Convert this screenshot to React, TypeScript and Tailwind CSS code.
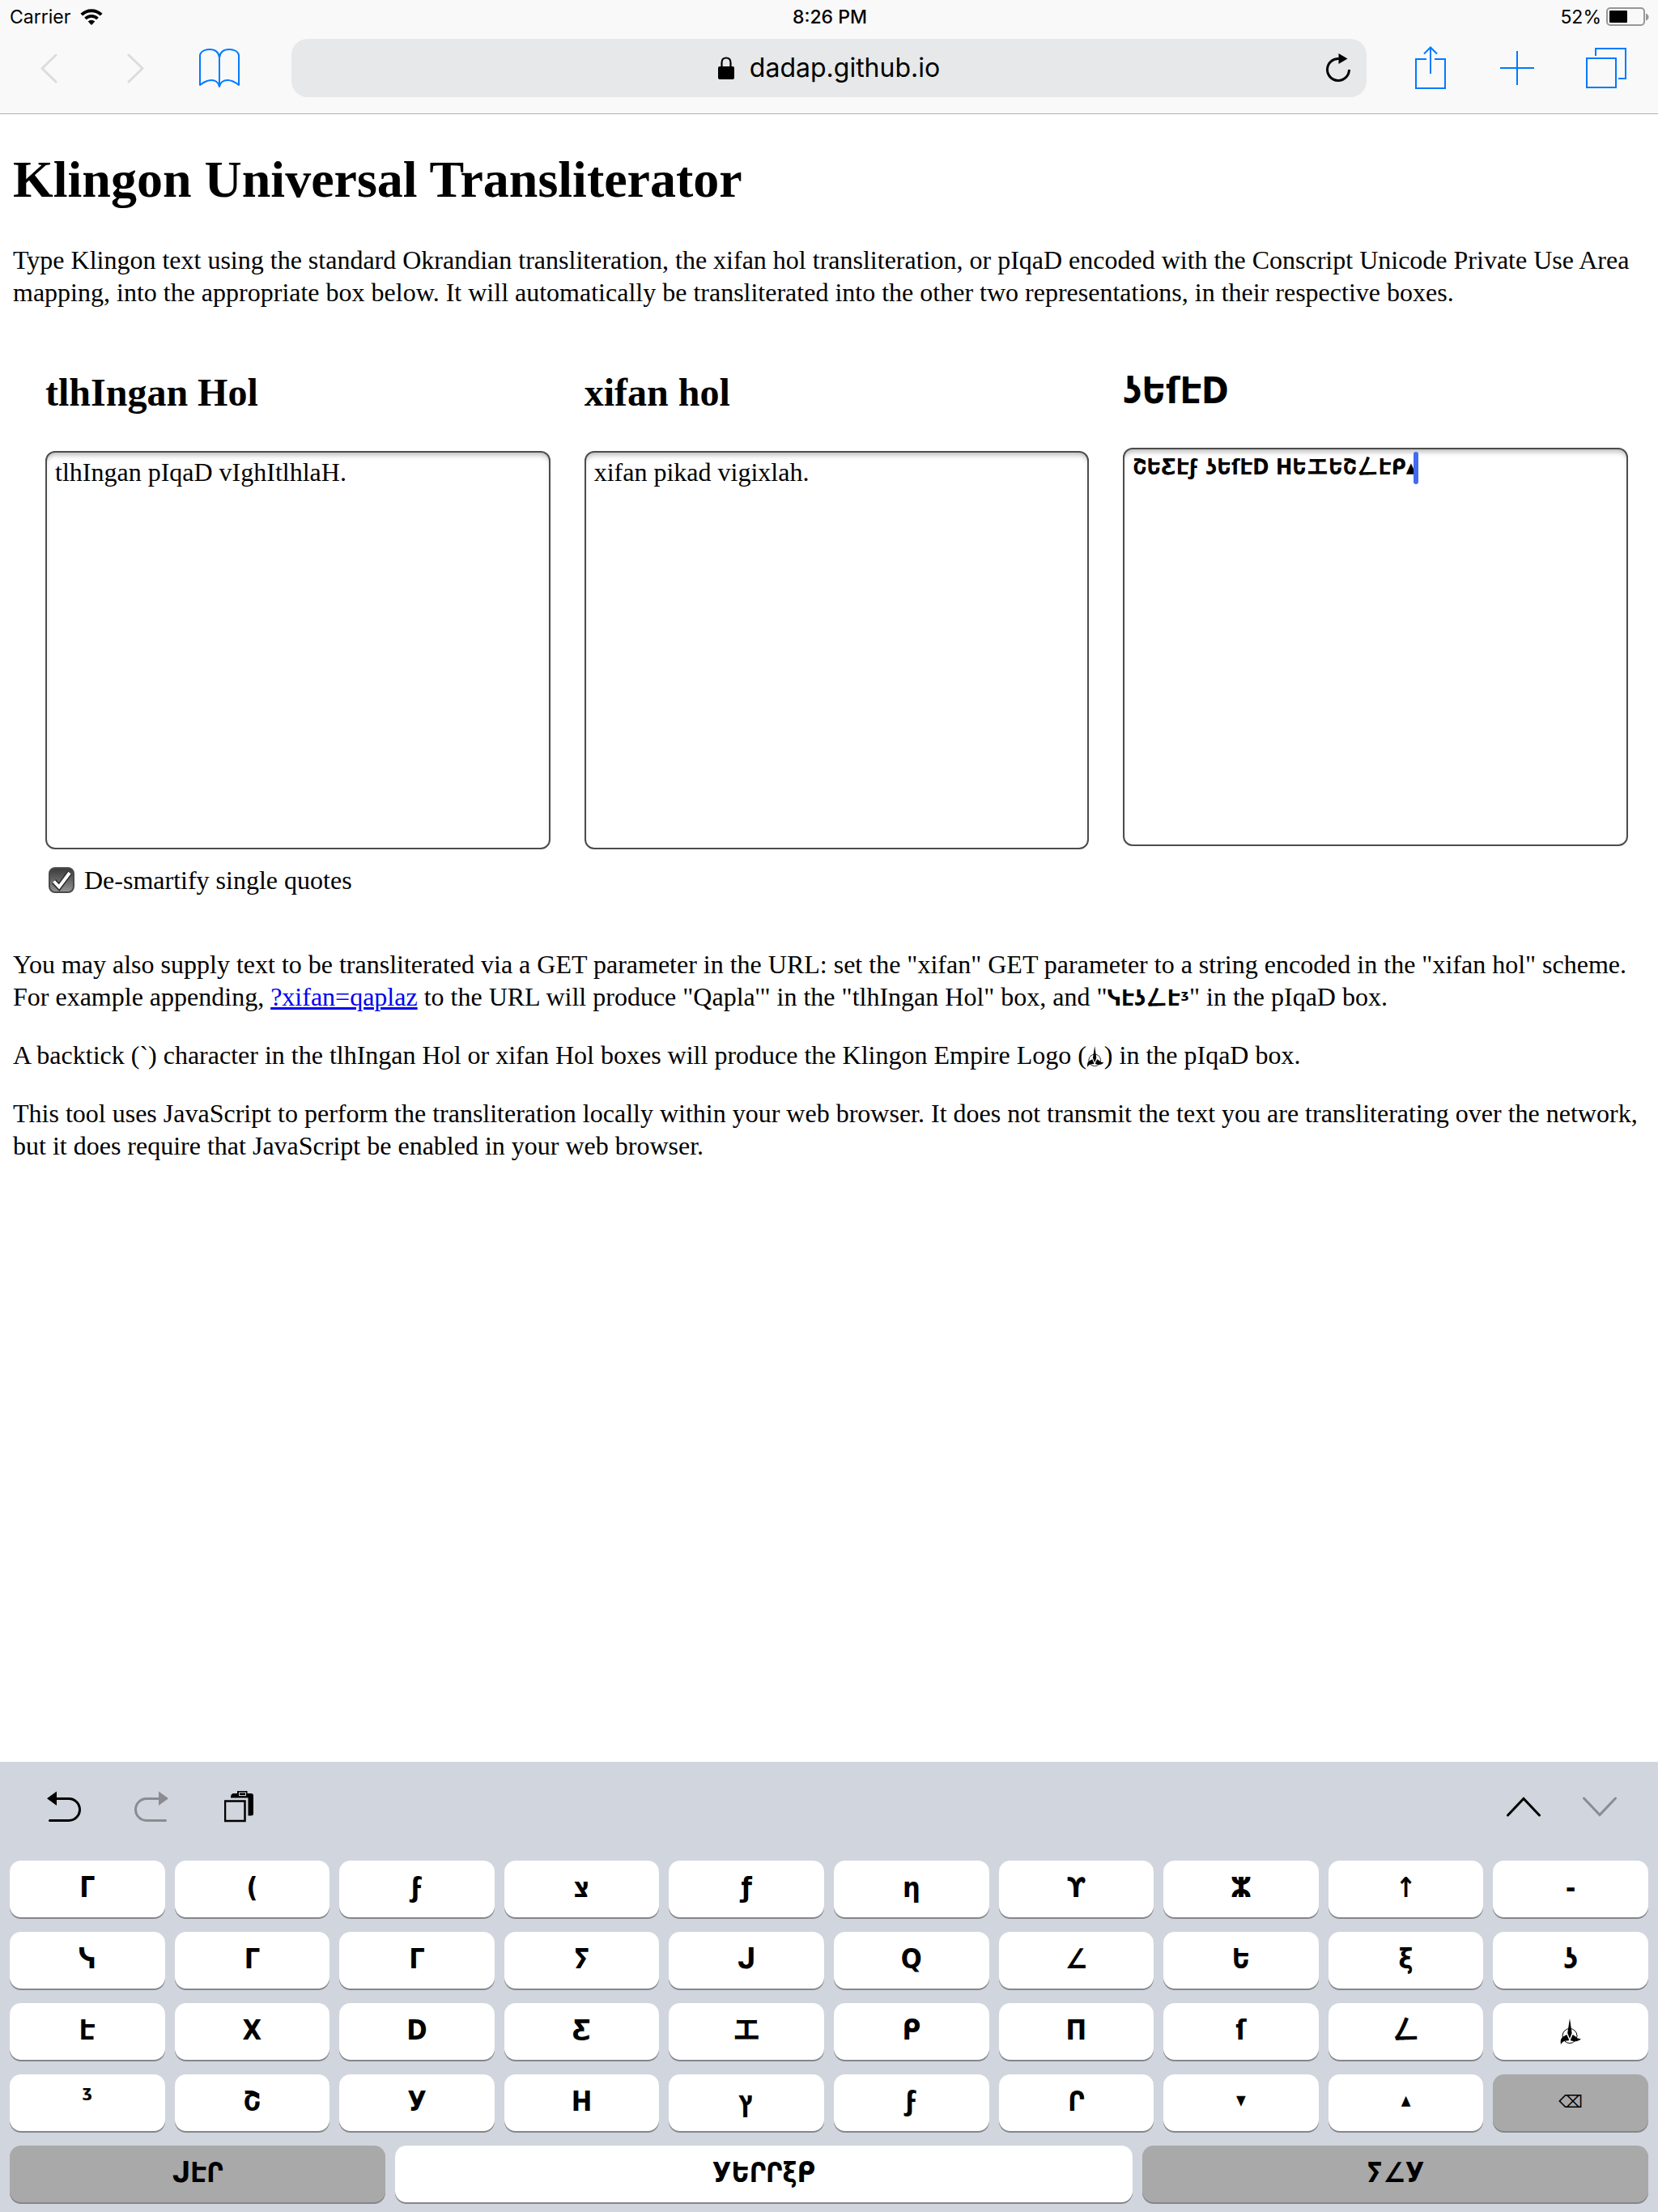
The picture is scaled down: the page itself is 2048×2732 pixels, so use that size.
import React from "react";

const PIQAD = "font-['DejaVu_Sans_Condensed','DejaVu_Sans','Noto_Sans_CJK_TC','Noto_Sans_CJK_JP',sans-serif] font-bold";

function Emblem({ className }: { className: string }) {
  return (
    <svg viewBox="0 0 26 32" className={className} aria-label="Klingon Empire logo" role="img">
      <circle cx="12" cy="21.5" r="9" fill="none" stroke="#000" strokeWidth="1" />
      <path d="M12 0 L14.6 18 L12 25 L9.2 18 Z" fill="#000" />
      <path d="M8.4 20 L11.3 27 L8.5 27.5 Q3.5 27 1 32 Q-.5 24.500 4.500 22 Z" fill="#000" />
      <path d="M15.6 20 L12.700 27 Q17 28.500 20 28.200 Q24 27.500 26 25 Q21 25.500 19 22 Z" fill="#000" />
    </svg>
  );
}

function WifiIcon() {
  return (
    <svg viewBox="0 0 28 20" className="h-5 w-7" aria-hidden="true">
      <path d="M1.800 7.200 A17.300 17.300 0 0 1 26.200 7.200" fill="none" stroke="#000" strokeWidth="4" />
      <path d="M6.500 12 A10.600 10.600 0 0 1 21.500 12" fill="none" stroke="#000" strokeWidth="3.600" />
      <path d="M14 20 L9.700 15.600 A6 6 0 0 1 18.300 15.600 Z" fill="#000" />
    </svg>
  );
}

function StatusBar() {
  return (
    <div className="grid h-10 grid-cols-3 items-center pl-3 pr-2.5 pt-px font-[Inter,sans-serif] text-[23px] leading-10 text-black">
      <div className="flex items-center gap-3">
        <span>Carrier</span>
        <WifiIcon />
      </div>
      <div className="text-center font-medium">8:26 PM</div>
      <div className="flex items-center justify-end gap-1.5">
        <span>52%</span>
        <svg viewBox="0 0 54 24" className="h-6 w-[54px]" aria-hidden="true">
          <rect x="1" y="1" width="46" height="21" rx="4" fill="none" stroke="#979797" strokeWidth="2" />
          <rect x="4" y="4" width="22" height="15" rx="1" fill="#000" />
          <path d="M49 7.500 Q52.500 9 52.500 12 Q52.500 15 49 16.500 Z" fill="#979797" />
        </svg>
      </div>
    </div>
  );
}

function BrowserBar() {
  const stroke = { fill: "none", stroke: "#007aff", strokeWidth: 2 };
  return (
    <div className="flex h-[100px] items-start pt-2">
      <div className="flex h-[72px] w-[360px] shrink-0 items-center">
        <button aria-label="Back" disabled className="ml-12">
          <svg viewBox="0 0 24 38" className="h-[38px] w-6"><path d="M21 3 L4 19.500 L21 36" fill="none" stroke="#dcdcdd" strokeWidth="3" strokeLinecap="round" strokeLinejoin="round" /></svg>
        </button>
        <button aria-label="Forward" disabled className="ml-[82px]">
          <svg viewBox="0 0 24 38" className="h-[38px] w-6"><path d="M5 3 L22 19.500 L5 36" fill="none" stroke="#dcdcdd" strokeWidth="3" strokeLinecap="round" strokeLinejoin="round" /></svg>
        </button>
        <button aria-label="Bookmarks" className="ml-[67px]">
          <svg viewBox="0 0 52 50" className="h-[50px] w-[52px]">
            <path d="M26 48 V12 C25 5 20 2 14 2 C8 2 3 4.500 2 9 V46 C7 42 12 40 16 40 C21 40 25 43 26 48 C27 43 31 40 36 40 C40 40 45 42 50 46 V9 C49 4.500 44 2 38 2 C32 2 27 5 26 12" {...stroke} strokeLinejoin="round" />
          </svg>
        </button>
      </div>
      <div className="relative flex h-[72px] grow items-center justify-center rounded-[20px] bg-[#e6e8e9]">
        <div className="flex items-center gap-[19px]">
          <svg viewBox="0 0 20 28" className="h-7 w-5" aria-hidden="true">
            <path d="M4.500 13 V7.500 Q4.500 1.500 10 1.500 Q15.500 1.500 15.500 7.500 V13" fill="none" stroke="#000" strokeWidth="2.200" />
            <rect x="0" y="12" width="20" height="16" rx="2" fill="#000" />
          </svg>
          <span className="font-[Inter,sans-serif] text-[32px] leading-[72px]">dadap.github.io</span>
        </div>
        <button aria-label="Reload" className="absolute right-[18px] top-[17px]">
          <svg viewBox="0 0 34 38" className="h-[38px] w-[34px]">
            <path d="M18 7.500 A13.500 13.500 0 1 0 30.500 21" fill="none" stroke="#000" strokeWidth="3" />
            <path d="M17.500 1 L28.500 7.500 L17.500 14 Z" fill="#000" />
          </svg>
        </button>
      </div>
      <div className="flex h-[72px] w-[360px] shrink-0 items-center">
        <button aria-label="Share" className="ml-[58px]">
          <svg viewBox="0 0 42 56" className="h-14 w-[42px]">
            <path d="M16 17 H3 V53 H39 V17 H26 M21 35 V3 M13 10.500 L21 2.500 L29 10.500" {...stroke} />
          </svg>
        </button>
        <button aria-label="New tab" className="ml-16">
          <svg viewBox="0 0 44 44" className="h-11 w-11"><path d="M22 1 V43 M1 22 H43" {...stroke} /></svg>
        </button>
        <button aria-label="Tabs" className="ml-[62px]">
          <svg viewBox="0 0 52 52" className="h-[52px] w-[52px]">
            <path d="M2 14 H38 V50 H2 Z M13 11 V2 H50 V39 H41" {...stroke} />
          </svg>
        </button>
      </div>
    </div>
  );
}

function Box({ id, title, value, klingon }: { id: string; title: string; value: string; klingon?: boolean }) {
  return (
    <div className="flex min-w-0 grow basis-0 flex-col">
      <h2 className={klingon ? `${PIQAD} h-24 text-[45px] leading-[52px]` : "h-[100px] text-[48px] font-bold leading-[56px]"}>
        <label htmlFor={id}>{title}</label>
      </h2>
      <div className="relative">
        <textarea
          id={id}
          defaultValue={value}
          spellCheck={false}
          className={
            klingon
              ? `${PIQAD} block h-[492px] w-full resize-none rounded-[12px] border-2 border-[#4c4c4c] bg-white px-2.5 py-0.5 text-[27px] leading-[40px] shadow-[inset_0_6px_6px_-3px_rgba(0,0,0,0.28)] outline-none`
              : "block h-[492px] w-full resize-none rounded-[12px] border-2 border-[#4c4c4c] bg-white px-2.5 py-1 text-[32px] leading-[40px] shadow-[inset_0_6px_6px_-3px_rgba(0,0,0,0.28)] outline-none"
          }
        />
        {klingon && <span className="absolute left-[359px] top-[5px] h-10 w-1.5 rounded-sm bg-[#426bf2]" />}
      </div>
    </div>
  );
}

const ROWS: [string, string][][] = [
  [["b", "ᒥ"], ["ch", "("], ["n", "ϝ"], ["gh", "צ"], ["ng", "ƒ"], ["u", "η"], ["r", "ϒ"], ["t", "ⵣ"], ["v", "↑"], ["dash", "-"]],
  [["q", "ᓭ"], ["w", "Γ"], ["e", "Γ"], ["s", "ⵢ"], ["j", "ᒍ"], ["Q", "Q"], ["l", "∠"], ["I", "Ե"], ["o", "ξ"], ["p", "ʖ"]],
  [["a", "Է"], ["x", "X"], ["D", "D"], ["z", "Ƹ"], ["g", "エ"], ["H", "ᑭ"], ["m", "Π"], ["k", "ſ"], ["L", "ㄥ"], ["logo", ""]],
  [["quote", "ᶾ"], ["tlh", "Շ"], ["y", "У"], ["H-bar", "H"], ["Y", "ץ"], ["f", "ϝ"], ["S", "Ր"], ["comma", "▾"], ["period", "▴"], ["delete", "⌫"]],
];

const KEY = "flex h-[70px] items-center justify-center rounded-[14px] shadow-[0_2px_0_#84868b]";

function Key({ name, glyph }: { name: string; glyph: string }) {
  if (name === "delete") {
    return <button aria-label="Delete" className={`${KEY} bg-[#a9a9a9] font-['DejaVu_Sans',sans-serif] text-[21px]`}>{glyph}</button>;
  }
  if (name === "logo") {
    return <button aria-label="Logo" className={`${KEY} bg-white`}><Emblem className="h-8 w-[26px]" /></button>;
  }
  if (name === "quote") {
    return <button aria-label={name} className={`${KEY} ${PIQAD} bg-white pb-4 text-[34px]`}>{glyph}</button>;
  }
  const small = name === "comma" || name === "period";
  return (
    <button aria-label={name} className={small ? `${KEY} ${PIQAD} bg-white pb-2 text-[26px]` : `${KEY} ${PIQAD} bg-white pb-1 text-[34px]`}>
      {glyph}
    </button>
  );
}

function Keyboard() {
  return (
    <div className="flex flex-col bg-[#d1d5dd] px-3 pb-3">
      <div className="flex h-[122px] items-start pt-9">
        <button aria-label="Undo" className="ml-[46px]">
          <svg viewBox="0 0 42 40" className="h-10 w-[42px]">
            <path d="M10 9.500 H27 A13.500 13.500 0 0 1 27 36.500 H3.500" fill="none" stroke="#000" strokeWidth="3" strokeLinecap="round" />
            <path d="M12 0.500 V18 L0 9.300 Z" fill="#000" />
          </svg>
        </button>
        <button aria-label="Redo" disabled className="ml-[66px]">
          <svg viewBox="0 0 42 40" className="h-10 w-[42px]">
            <path d="M32 9.500 H15 A13.500 13.500 0 0 0 15 36.500 H38.500" fill="none" stroke="#8b8c90" strokeWidth="3" strokeLinecap="round" />
            <path d="M30 0.500 V18 L42 9.300 Z" fill="#8b8c90" />
          </svg>
        </button>
        <button aria-label="Paste" className="ml-[69px]">
          <svg viewBox="0 0 38 40" className="h-10 w-[38px]">
            <rect x="1" y="12.500" width="24.500" height="24.500" fill="none" stroke="#000" strokeWidth="2.500" />
            <path d="M8 8 Q8 3 12 3 H16 V0 H28.500 V3 H33 Q36 3 36 6 V28 Q36 30.500 33 30.500 H29.500 V8.500 H8 Z" fill="#000" />
            <rect x="18.500" y="2" width="8" height="3.500" fill="none" stroke="#d1d5dd" strokeWidth="1" />
          </svg>
        </button>
        <button aria-label="Previous field" className="ml-auto mt-1">
          <svg viewBox="0 0 42 32" className="h-8 w-[42px]"><path d="M1.500 26 L21 5.500 L40.500 26" fill="none" stroke="#000" strokeWidth="3" strokeLinecap="round" /></svg>
        </button>
        <button aria-label="Next field" disabled className="ml-[52px] mr-[39px] mt-1">
          <svg viewBox="0 0 42 32" className="h-8 w-[42px]"><path d="M1.500 5 L21 25.500 L40.500 5" fill="none" stroke="#8b8c90" strokeWidth="3" strokeLinecap="round" /></svg>
        </button>
      </div>
      <div className="flex flex-col gap-[18px]">
        {ROWS.map((row, i) => (
          <div key={i} className="grid grid-cols-10 gap-3">
            {row.map(([name, glyph]) => (
              <Key key={name} name={name} glyph={glyph} />
            ))}
          </div>
        ))}
        <div className="flex gap-3">
          <button className={`${KEY} ${PIQAD} grow-[464] basis-0 bg-[#a9a9a9] pb-1 text-[34px]`}>ᒍԷՐ</button>
          <button className={`${KEY} ${PIQAD} grow-[911] basis-0 bg-white pb-1 text-[34px]`}>УԵՐՐξᑭ</button>
          <button className={`${KEY} ${PIQAD} grow-[625] basis-0 bg-[#a9a9a9] pb-1 text-[34px]`}>ⵢ∠У</button>
        </div>
      </div>
    </div>
  );
}

export default function App() {
  return (
    <div className="flex min-h-screen flex-col bg-white text-black">
      <header className="border-b border-[#b2b2b2] bg-[#f9f9f9]">
        <StatusBar />
        <BrowserBar />
      </header>
      <main className="grow px-4 font-['Liberation_Serif',serif] text-[32px] leading-[40px]">
        <h1 className="mt-[45px] text-[64px] font-bold leading-[72px]">Klingon Universal Transliterator</h1>
        <p className="mt-[43px]">
          Type Klingon text using the standard Okrandian transliteration, the xifan hol transliteration, or pIqaD encoded with the Conscript Unicode Private Use Area mapping, into the appropriate box below. It will automatically be transliterated into the other two representations, in their respective boxes.
        </p>
        <div className="mt-[76px] flex gap-[42px] pl-10 pr-[21px]">
          <Box id="tlhingan" title="tlhIngan Hol" value="tlhIngan pIqaD vIghItlhlaH." />
          <Box id="xifan" title="xifan hol" value="xifan pikad vigixlah." />
          <Box id="piqad" title="ʖԵſԷD" value="ՇԵƸԷϝ ʖԵſԷD HԵエԵՇㄥԷᑭ▴" klingon />
        </div>
        <div className="mt-[18px] flex items-center gap-3 pl-11">
          <span className="relative flex h-8 w-8">
            <input
              id="desmart"
              type="checkbox"
              defaultChecked
              className="h-8 w-8 appearance-none rounded-[8px] border-2 border-[#4a4a4a] bg-linear-to-b from-[#3c3c3c] to-[#929292]"
            />
            <svg viewBox="0 0 32 32" className="pointer-events-none absolute inset-0 h-8 w-8" aria-hidden="true">
              <path d="M6.500 17.500 L13 24.500 L26 7" fill="none" stroke="#2a2a2a" strokeWidth="7" />
              <path d="M6.500 17.500 L13 24.500 L26 7" fill="none" stroke="#fff" strokeWidth="4" />
            </svg>
          </span>
          <label htmlFor="desmart">De-smartify single quotes</label>
        </div>
        <p className="mt-16">
          You may also supply text to be transliterated via a GET parameter in the URL: set the "xifan" GET parameter to a string encoded in the "xifan hol" scheme. For example appending,{" "}
          <a href="?xifan=qaplaz" className="text-[#0000ee] underline">?xifan=qaplaz</a> to the URL will produce "Qapla'" in the "tlhIngan Hol" box, and "<span className={`${PIQAD} text-[27px] leading-none`}>ᓭԷʖㄥԷᶾ</span>" in the pIqaD box.
        </p>
        <p className="mt-8">
          A backtick (`) character in the tlhIngan Hol or xifan Hol boxes will produce the Klingon Empire Logo (<Emblem className="inline h-[26px] w-[22px] align-[-4px]" />) in the pIqaD box.
        </p>
        <p className="mt-8">
          This tool uses JavaScript to perform the transliteration locally within your web browser. It does not transmit the text you are transliterating over the network, but it does require that JavaScript be enabled in your web browser.
        </p>
      </main>
      <Keyboard />
    </div>
  );
}
